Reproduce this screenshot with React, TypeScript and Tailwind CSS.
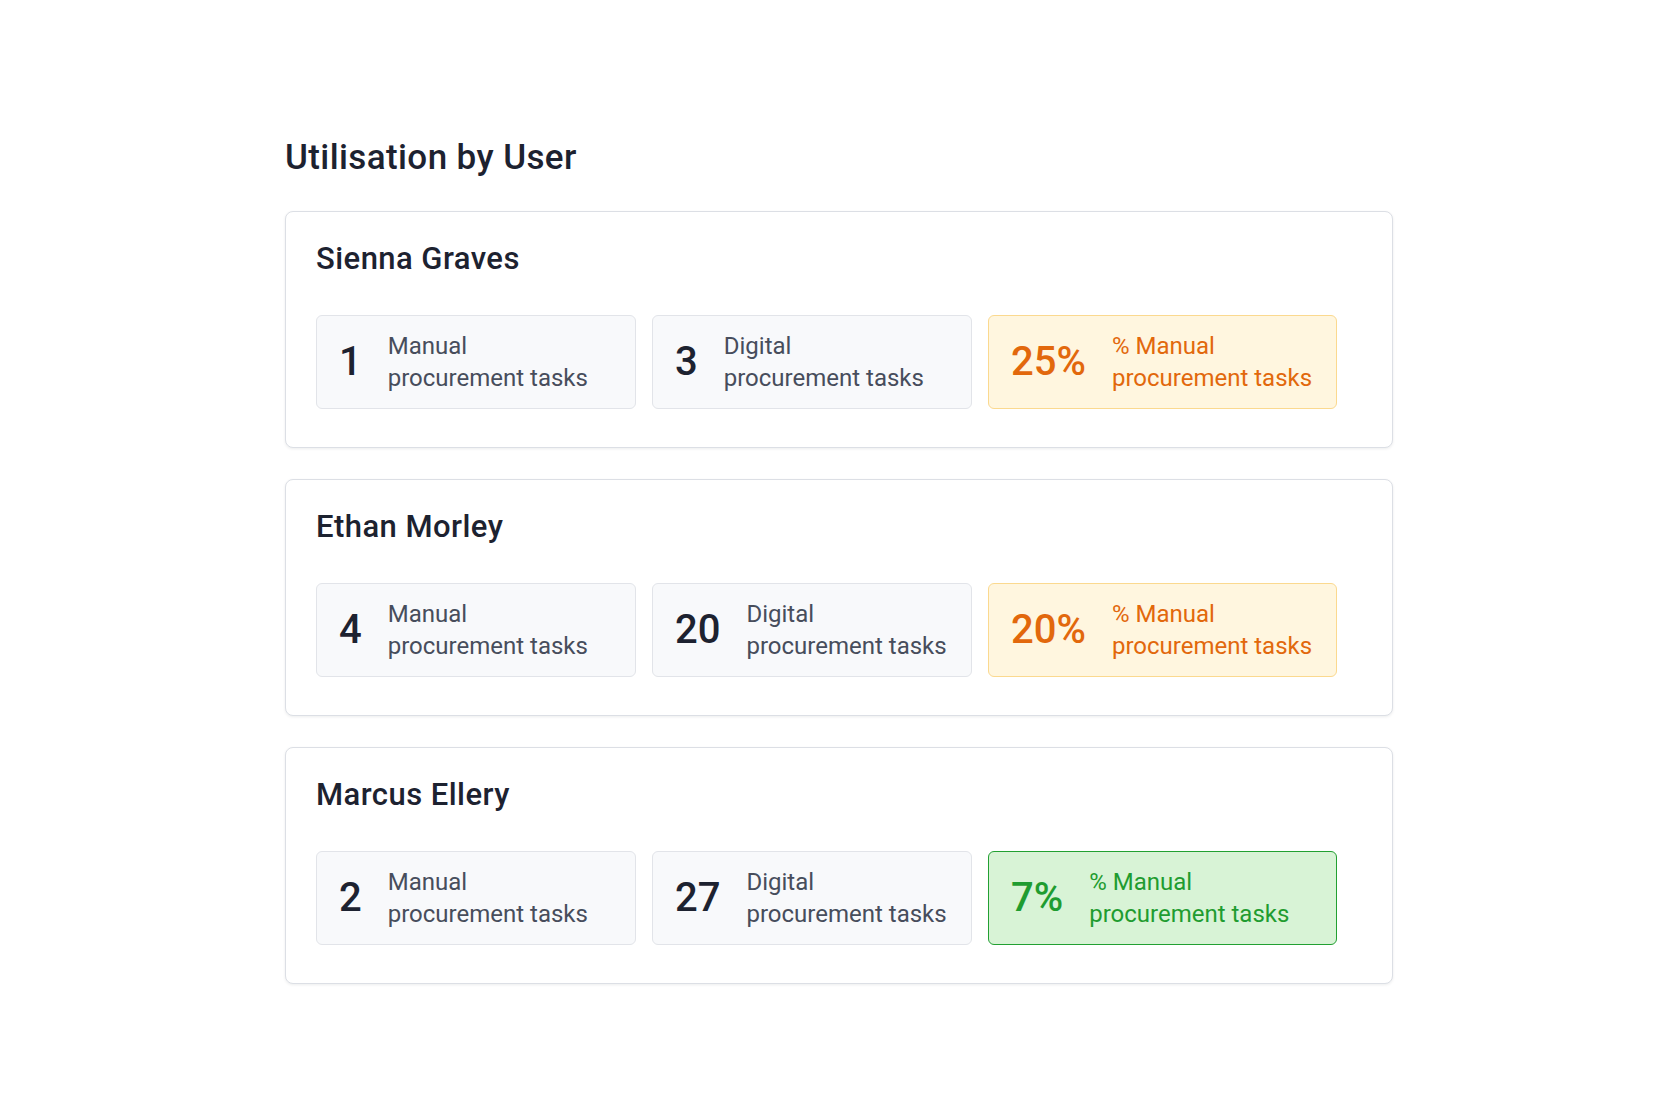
import React from "react";

type Tone = "neutral" | "orange" | "green";

function Stat({ value, label1, label2, tone, wide }: { value: string; label1: string; label2: string; tone: Tone; wide?: boolean }) {
  const box =
    tone === "neutral"
      ? "bg-[#f8f9fb] border-[#e2e4e9]"
      : tone === "orange"
      ? "bg-[#fff6df] border-[#fbd98f]"
      : "bg-[#d8f3d6] border-[#22a032]";
  const num = tone === "neutral" ? "text-[#1d2230]" : tone === "orange" ? "text-[#e2680c]" : "text-[#1f9c30]";
  const lab = tone === "neutral" ? "text-[#474d5c]" : tone === "orange" ? "text-[#e2680c]" : "text-[#1f9c30]";
  return (
    <div className={`flex items-center gap-[26px] rounded-md border pl-[22px] pr-4 h-[94px] ${box} ${wide ? "w-[349px]" : "w-[320px]"}`}>
      <div className={`text-[40px] leading-[48px] font-medium ${num}`}>{value}</div>
      <div className={`text-[24px] leading-[32px] ${lab}`}>
        <div>{label1}</div>
        <div>{label2}</div>
      </div>
    </div>
  );
}

function UserCard({ name, manual, digital, pct, tone }: { name: string; manual: string; digital: string; pct: string; tone: Tone }) {
  return (
    <div className="rounded-lg border border-[#dcdfe5] bg-white px-[30px] pt-[29px] pb-[38px] shadow-[0_1px_3px_rgba(16,24,40,0.08)]">
      <div className="text-[31px] leading-[36px] font-medium tracking-[0.45px] text-[#1d2230]">{name}</div>
      <div className="mt-[38px] flex gap-4">
        <Stat value={manual} label1="Manual" label2="procurement tasks" tone="neutral" />
        <Stat value={digital} label1="Digital" label2="procurement tasks" tone="neutral" />
        <Stat value={pct} label1="% Manual" label2="procurement tasks" tone={tone} wide />
      </div>
    </div>
  );
}

export default function App() {
  return (
    <div className="min-h-[1120px] w-full bg-white" style={{ fontFamily: "Roboto, 'Liberation Sans', sans-serif" }}>
      <div className="ml-[285px] w-[1108px] pt-[138px]">
        <h1 className="text-[35px] leading-[40px] font-medium tracking-[0.4px] text-[#1d2230]">Utilisation by User</h1>
        <div className="mt-[33px] flex flex-col gap-[31px]">
          <UserCard name="Sienna Graves" manual="1" digital="3" pct="25%" tone="orange" />
          <UserCard name="Ethan Morley" manual="4" digital="20" pct="20%" tone="orange" />
          <UserCard name="Marcus Ellery" manual="2" digital="27" pct="7%" tone="green" />
        </div>
      </div>
    </div>
  );
}
